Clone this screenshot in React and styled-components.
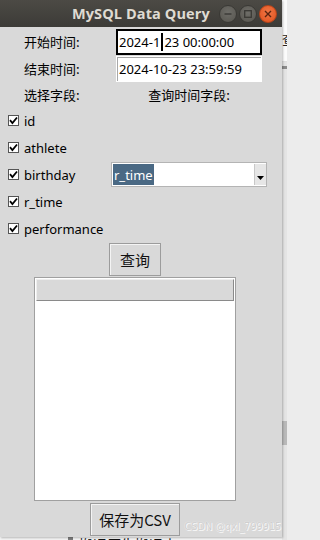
import React from "react";
import styled, { createGlobalStyle } from "styled-components";

const Global = createGlobalStyle`
  html, body { margin: 0; padding: 0; height: 540px; overflow: hidden; background: #ececec; }
  * { box-sizing: border-box; }
`;

const Page = styled.div`
  display: grid;
  grid-template-columns: 282px 5px;
  grid-template-rows: 537px 3px;
  width: 287px;
  height: 540px;
  background: #ececec;
  font-family: "Noto Sans", "Noto Sans CJK SC", sans-serif;
`;

const Window = styled.div`
  grid-column: 1;
  grid-row: 1;
  display: flex;
  flex-direction: column;
  background: #d9d9d9;
  box-shadow: 1px 1px 2px rgba(0, 0, 0, 0.25);
  overflow: hidden;
  position: relative;
  z-index: 1;
`;

const TitleBar = styled.div`
  height: 27px;
  flex: none;
  display: flex;
  align-items: center;
  background: linear-gradient(#4c4a45, #3c3b37);
  padding-left: 72px;
`;

const Title = styled.div`
  font-family: "Open Sans", "DejaVu Sans", sans-serif;
  font-weight: 700;
  font-size: 14.5px;
  color: #dfdbd2;
  letter-spacing: 0.1px;
  width: 147px;
`;

const Controls = styled.div`
  display: flex;
  gap: 2px;
  align-items: center;
`;

const Circle = styled.div`
  width: 18px;
  height: 18px;
  border-radius: 50%;
  background: ${(p) => (p.$close ? "radial-gradient(circle at 50% 40%, #f07746, #e0501c)" : "radial-gradient(circle at 50% 40%, #6e6d68, #57554f)")};
  border: 1px solid ${(p) => (p.$close ? "#b8441a" : "#3a3935")};
  display: flex;
  align-items: center;
  justify-content: center;
`;

const Body = styled.div`
  flex: 1;
  display: flex;
  flex-direction: column;
  align-items: center;
  padding-right: 12px;
  font-size: 13px;
  color: #000;
`;

const Form = styled.div`
  align-self: stretch;
  display: grid;
  grid-template-columns: 111px 156px;
  grid-template-rows: 27px 27px 25px repeat(5, 27px);
  margin-top: 1px;
`;

const Label = styled.div`
  display: flex;
  align-items: center;
  padding-left: ${(p) => (p.$center ? "0" : "24px")};
  justify-content: ${(p) => (p.$center ? "center" : "flex-start")};
  font-family: "Noto Sans CJK SC", sans-serif;
  font-size: 13px;
`;

const Cell = styled.div`
  display: flex;
  align-items: center;
  justify-content: center;
`;

const Entry = styled.div`
  width: 146px;
  height: 26px;
  background: #fff;
  border: ${(p) => (p.$focus ? "2px solid #000" : "1px solid transparent")};
  box-shadow: ${(p) => (p.$focus ? "none" : "inset 1px 1px 0 #a8a8a8")};
  display: flex;
  align-items: center;
  padding-left: ${(p) => (p.$focus ? "1px" : "2px")};
  font-size: 13px;
  white-space: nowrap;
  overflow: hidden;
`;

const Caret = styled.span`
  display: inline-block;
  width: 2px;
  height: 18px;
  background: #000;
  margin: 0 1px;
`;

const Check = styled.div`
  display: flex;
  align-items: center;
  gap: 5px;
  padding-left: 8px;
  font-size: 13px;
`;

const Box = styled.div`
  width: 11px;
  height: 11px;
  background: #fff;
  border: 1px solid #555;
  display: flex;
  align-items: center;
  justify-content: center;
`;

const Combo = styled.div`
  width: 156px;
  height: 25px;
  background: #fff;
  border: 1px solid #b4b4b4;
  display: flex;
  align-items: stretch;
  padding: 1px 0 1px 1px;
`;

const Selected = styled.span`
  background: #4a6984;
  color: #fff;
  padding: 0 1px;
  display: flex;
  align-items: center;
`;

const Spacer = styled.div`
  flex: 1;
`;

const ArrowBtn = styled.div`
  width: 12px;
  background: #e6e6e6;
  border-left: 1px solid #c8c8c8;
  display: flex;
  align-items: flex-end;
  justify-content: center;
  padding-bottom: 5px;
`;

const Button = styled.div`
  width: ${(p) => p.$w}px;
  height: 33px;
  flex: none;
  display: flex;
  align-items: center;
  justify-content: center;
  background: #d9d9d9;
  border: 1px solid #9c9c9c;
  box-shadow: inset 1px 1px 0 #f4f4f4;
  font-family: "Noto Sans CJK SC", sans-serif;
  font-size: 15px;
  color: #111;
  margin-top: ${(p) => p.$mt || 0}px;
`;

const Tree = styled.div`
  width: 202px;
  height: 224px;
  flex: none;
  margin-top: 1px;
  border: 1px solid #a0a0a0;
  background: #fff;
  display: flex;
  flex-direction: column;
  padding: 1px;
`;

const TreeHeader = styled.div`
  height: 22px;
  background: #d9d9d9;
  border: 1px solid #8a8a8a;
  border-top-color: #eee;
  border-left-color: #eee;
`;

const Watermark = styled.div`
  position: absolute;
  right: 1px;
  bottom: 5px;
  font-family: "DejaVu Sans", sans-serif;
  font-size: 10px;
  color: #cfcfcf;
  text-shadow: 0 0 1px #fff, 1px 1px 0 #f6f6f6;
  letter-spacing: -0.2px;
`;

const SideStrip = styled.div`
  grid-column: 2;
  grid-row: 1 / 3;
  overflow: hidden;
  display: flex;
  flex-direction: column;
  background: #e4e4e4;
`;

const StripTop = styled.div`
  height: 62px;
  background: #fbfbfb;
  padding-top: 32px;
  font-family: "Noto Sans CJK SC", sans-serif;
  font-size: 13px;
  line-height: 14px;
  color: #222;
  white-space: nowrap;
  border-bottom: 1px solid #e0e0e0;
`;

const StripLine = styled.div`
  height: 3px;
  background: #8c8c8c;
  margin-top: 4px;
`;

const StripThumb = styled.div`
  height: 24px;
  margin-top: ${(p) => p.$mt}px;
  background: #b9b9b9;
`;

const BottomStrip = styled.div`
  grid-column: 1;
  grid-row: 2;
  overflow: hidden;
  display: flex;
  align-items: flex-start;
  padding-left: 68px;
  gap: 6px;
  background: #f3f3f3;
`;

const BottomMark = styled.div`
  width: 5px;
  height: 3px;
  background: #7d7d7d;
`;

const BottomText = styled.div`
  font-family: "Noto Sans CJK SC", sans-serif;
  font-size: 14px;
  line-height: 14px;
  color: #111;
  white-space: nowrap;
`;

const CheckIcon = () => (
  <svg width="9" height="9" viewBox="0 0 9 9">
    <path d="M1 4.2 L3.4 7 L8 1.5" stroke="#000" strokeWidth="1.8" fill="none" />
  </svg>
);

const fields = ["id", "athlete", "birthday", "r_time", "performance"];

export default function App() {
  return (
    <>
      <Global />
      <Page>
        <Window>
          <TitleBar>
            <Title>MySQL Data Query</Title>
            <Controls>
              <Circle>
                <svg width="8" height="8" viewBox="0 0 8 8">
                  <line x1="0.5" y1="4" x2="7.5" y2="4" stroke="#3a3935" strokeWidth="1.4" />
                </svg>
              </Circle>
              <Circle>
                <svg width="8" height="8" viewBox="0 0 8 8">
                  <rect x="0.7" y="0.7" width="6.6" height="6.6" stroke="#3a3935" strokeWidth="1.3" fill="none" />
                </svg>
              </Circle>
              <Circle $close>
                <svg width="8" height="8" viewBox="0 0 8 8">
                  <path d="M1 1 L7 7 M7 1 L1 7" stroke="#5a2410" strokeWidth="1.4" />
                </svg>
              </Circle>
            </Controls>
          </TitleBar>
          <Body>
            <Form>
              <Label>开始时间:</Label>
              <Cell>
                <Entry $focus>
                  2024-1<Caret />23 00:00:00
                </Entry>
              </Cell>
              <Label>结束时间:</Label>
              <Cell>
                <Entry>2024-10-23 23:59:59</Entry>
              </Cell>
              <Label>选择字段:</Label>
              <Label $center>查询时间字段:</Label>
              {fields.map((f) => (
                <React.Fragment key={f}>
                  <Check>
                    <Box>
                      <CheckIcon />
                    </Box>
                    {f}
                  </Check>
                  <Cell>
                    {f === "birthday" && (
                      <Combo>
                        <Selected>r_time</Selected>
                        <Spacer />
                        <ArrowBtn>
                          <svg width="7" height="4" viewBox="0 0 7 4">
                            <path d="M0 0 L7 0 L3.5 4 Z" fill="#000" />
                          </svg>
                        </ArrowBtn>
                      </Combo>
                    )}
                  </Cell>
                </React.Fragment>
              ))}
            </Form>
            <Button $w={52} $mt={1}>查询</Button>
            <Tree>
              <TreeHeader />
            </Tree>
            <Button $w={90} $mt={2}>保存为CSV</Button>
            <Watermark>CSDN @qxl_799915</Watermark>
          </Body>
        </Window>
        <SideStrip>
          <StripTop>查</StripTop>
          <StripLine />
          <StripThumb $mt={352} />
        </SideStrip>
        <BottomStrip>
          <BottomMark />
          <BottomText>搬运原生搬运中</BottomText>
        </BottomStrip>
      </Page>
    </>
  );
}
